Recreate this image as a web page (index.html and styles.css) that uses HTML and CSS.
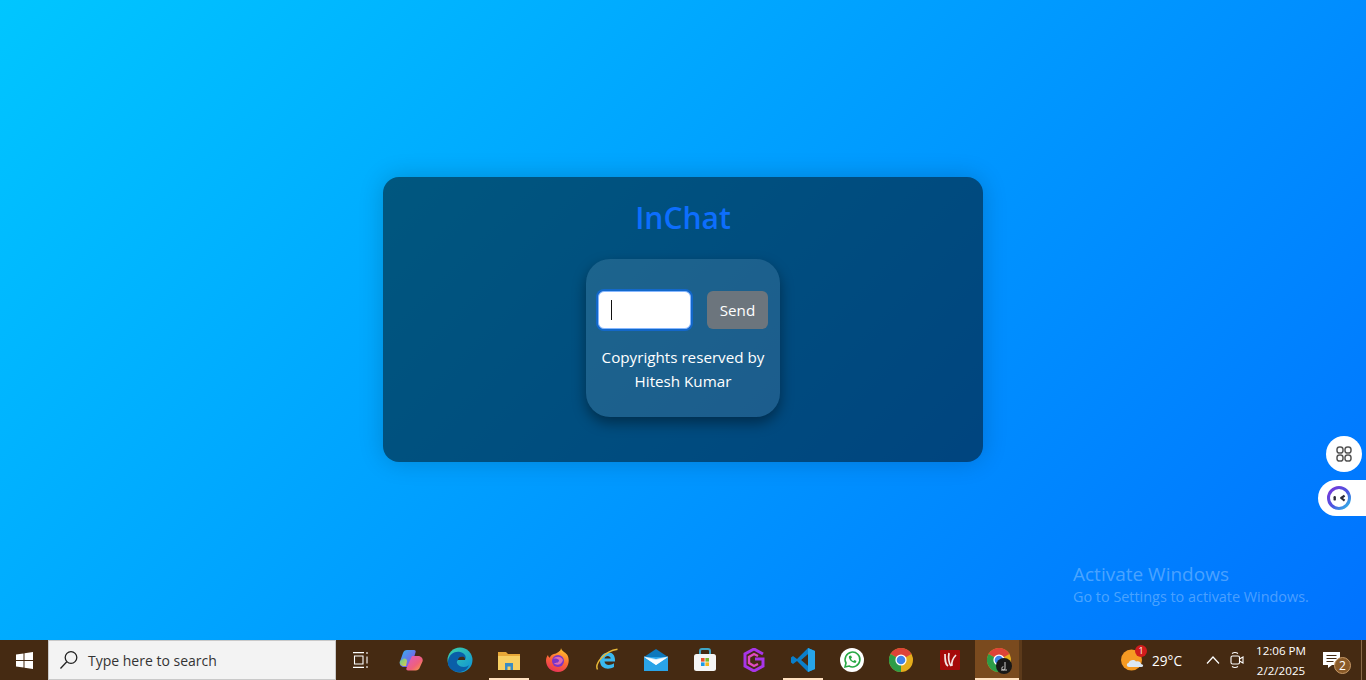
FILE: index.html
```html
<!DOCTYPE html>
<html lang="en">
<head>
<meta charset="utf-8">
<title>InChat</title>
<link rel="stylesheet" href="styles.css">
</head>
<body>
<main class="desktop">
  <section class="card">
    <h1 class="title">InChat</h1>
    <div class="panel">
      <form class="row">
        <div class="field"><span class="caret"></span></div>
        <button type="button" class="send">Send</button>
      </form>
      <p class="copy">Copyrights reserved by<br>Hitesh Kumar</p>
    </div>
  </section>
  <div class="watermark">
    <div class="wm-title">Activate Windows</div>
    <div class="wm-sub">Go to Settings to activate Windows.</div>
  </div>
  <div class="side-apps">
    <svg width="18" height="18" viewBox="0 0 18 18" fill="none" stroke="#555" stroke-width="1.5"><rect x="2" y="2" width="6" height="6" rx="2.6"/><rect x="10" y="2" width="6" height="6" rx="2.6"/><rect x="2" y="10" width="6" height="6" rx="2.6"/><rect x="10" y="10" width="6" height="6" rx="2.6"/></svg>
  </div>
  <div class="side-bot">
    <svg width="26" height="26" viewBox="0 0 26 26" fill="none">
      <defs><linearGradient id="botg" x1="0" y1="0" x2="1" y2="1"><stop offset="0" stop-color="#7a35d8"/><stop offset=".55" stop-color="#4a55e0"/><stop offset="1" stop-color="#2fc0e8"/></linearGradient></defs>
      <circle cx="13" cy="13" r="10.5" stroke="url(#botg)" stroke-width="3"/>
      <rect x="7.5" y="11" width="2.4" height="4.6" rx="1.2" fill="#2a2a3a"/>
      <path d="M18.6 10.6 15.2 13l3.4 2.6" stroke="#2a2a3a" stroke-width="2.2" stroke-linejoin="round"/>
    </svg>
  </div>
</main>
<footer class="taskbar">
  <div class="start">
    <svg width="17" height="17" viewBox="0 0 17 17" fill="#fff"><path d="M0 2.4 7.500 1.400V8H0zM8.500 1.200 17 0V8H8.500zM0 9H7.500V15.600L0 14.600zM8.500 9H17V17L8.500 15.800z"/></svg>
  </div>
  <div class="search">
    <svg width="20" height="20" viewBox="0 0 20 20" fill="none" stroke="#222" stroke-width="1.3"><circle cx="12" cy="7.5" r="5.8"/><path d="M7.8 11.8 1.5 18.5"/></svg>
    <span>Type here to search</span>
  </div>
  <div class="tray-apps">
    <div class="app task-view">
      <svg width="16" height="16" viewBox="0 0 16 16" fill="none" stroke="#fff" stroke-width="1.1"><path d="M0 .600H11M0 15.400H11M1.500 4H10V12H1.500zM14 0v2M14 4.500v7M14 14v2"/></svg>
    </div>
    <div class="app">
      <svg width="24" height="24" viewBox="0 0 24 24">
        <defs>
          <linearGradient id="cp1" x1="0" y1="0" x2="1" y2="1"><stop offset="0" stop-color="#2fb6f0"/><stop offset=".7" stop-color="#7a62e8"/><stop offset="1" stop-color="#b050d8"/></linearGradient>
          <linearGradient id="cp2" x1="0" y1="0" x2="1" y2="1"><stop offset="0" stop-color="#d85ac8"/><stop offset=".6" stop-color="#f0607a"/><stop offset="1" stop-color="#f8a83a"/></linearGradient>
          <linearGradient id="cp3" x1="0" y1="0" x2="1" y2="1"><stop offset="0" stop-color="#58c8a0"/><stop offset="1" stop-color="#e8d040"/></linearGradient>
        </defs>
        <path d="M8 2h7c1.500 0 2 1 1.500 2.500L12 19H5C2 19 0 16.500 1 13.500L4 5c.7-2 2-3 4-3z" fill="url(#cp1)"/>
        <path d="M4 11c2-1 4 0 4 2l-1 5H5c-3 0-5-2.500-4-5z" fill="url(#cp3)"/>
        <path d="M13 8h6c3 0 5.500 2.500 4.500 5.500L21 19c-.7 2-2 3.500-4.500 3.500H9c-1.500 0-2-1-1.500-2.500z" fill="url(#cp2)"/>
      </svg>
    </div>
    <div class="app">
      <svg width="26" height="26" viewBox="0 0 26 26">
        <defs><linearGradient id="edg" x1="0" y1="0" x2="1" y2="1"><stop offset="0" stop-color="#3fd3a8"/><stop offset="1" stop-color="#0c8fd8"/></linearGradient></defs>
        <circle cx="13" cy="13" r="12.5" fill="url(#edg)"/>
        <path d="M1 14C2 7 8 4 13 5c5 1 7 5 5 8h-7c-3 2 0 7 6 7 2 0 4-1 5-2-2 5-6 7-10 7C5 25 0 20 1 14z" fill="#0a5ea8"/>
        <path d="M11 13c0-3 3-4 6-3 1 1 1 2 1 3z" fill="#452a12"/>
      </svg>
    </div>
    <div class="app on">
      <svg width="22" height="20" viewBox="0 0 22 20">
        <path d="M0 2h8l2 2h12v4H0z" fill="#e8a838"/><path d="M0 6h22v14H0z" fill="#f8cf62"/><path d="M7 13h8v7h-2.500v-3.500h-3V20H7z" fill="#3a8cc4"/>
      </svg>
    </div>
    <div class="app">
      <svg width="24" height="24" viewBox="0 0 24 24">
        <defs><linearGradient id="ffx" x1=".7" y1="0" x2=".3" y2="1"><stop offset="0" stop-color="#ffc62c"/><stop offset=".5" stop-color="#ff6a33"/><stop offset="1" stop-color="#e8305a"/></linearGradient></defs>
        <path d="M15 0c.5 3 4 4 6 6.500 4 6 1 17.500-9 17.500C5 24 0 19 0 12.500 0 10 1 8 2 7c.3 1.500.8 2.200 1.800 2.700C4.500 7 7 6 10 5.500 12 4 15 3 15 0z" fill="url(#ffx)"/>
        <circle cx="12" cy="13" r="6" fill="#7a35c8"/><path d="M7 11c3-3 8-3 10 1-1 5-7 6-9 3 2 0 5 0 5-3-1-1-4-2-6-1z" fill="#e06ab0"/>
      </svg>
    </div>
    <div class="app">
      <svg width="24" height="24" viewBox="0 0 24 24" fill="none">
        <path d="M5 13c0-5.500 4-8.500 8.500-8.500S20 8 20 12v1.500H9.500c.3 4 5.500 4.500 9.500 1.800v3.700c-6 3.500-14 1.500-14-6zM9.500 10.500H15.800C15.500 7 10 7 9.500 10.500z" fill="#3ab8ee" fill-rule="evenodd"/>
        <path d="M2.500 21.500C-.5 16 9 3 22.500 1.200" stroke="#e8b838" stroke-width="1.500"/>
      </svg>
    </div>
    <div class="app">
      <svg width="24" height="22" viewBox="0 0 24 22">
        <path d="M0 8 12 0l12 8v1H0z" fill="#0e78bc"/><path d="M0 8h24v14H0z" fill="#2aa4e8"/><path d="M0 8 12 16 24 8l0-.500L12 10 0 7.500z" fill="#cfe9fa"/><path d="M1 8.500 12 11l11-2.500L12 16z" fill="#fff"/>
      </svg>
    </div>
    <div class="app">
      <svg width="24" height="24" viewBox="0 0 24 24" fill="none">
        <path d="M7 7V3c0-1 1-2 2-2h6c1 0 2 1 2 2v4" stroke="#3fa6c8" stroke-width="2"/>
        <rect x="1" y="6" width="22" height="17" rx="2.500" fill="#f5f5f5"/>
        <rect x="8" y="10" width="3.600" height="3.600" fill="#e8502a"/><rect x="12.400" y="10" width="3.600" height="3.600" fill="#7ab92c"/><rect x="8" y="14.400" width="3.600" height="3.600" fill="#1b9be8"/><rect x="12.400" y="14.400" width="3.600" height="3.600" fill="#f5b71d"/>
      </svg>
    </div>
    <div class="app">
      <svg width="22" height="24" viewBox="0 0 22 24" fill="none">
        <path d="M20 6 11 1 2 6v12l9 5 9-5v-7h-8" stroke="#a835e8" stroke-width="3"/>
        <path d="M15 8l-4-2-5 3v6l5 3 4-2" stroke="#e04ac0" stroke-width="2.400"/>
      </svg>
    </div>
    <div class="app on">
      <svg width="24" height="24" viewBox="0 0 24 24">
        <path d="M17 0 24 3v18l-7 3L6 13l-4 3-2-1.500V9.500L2 8l4 3z" fill="#0a7fcb"/>
        <path d="M17 0 24 3v18l-7 3zM17 6l-7 6 7 6z" fill="#27a5ea"/>
        <path d="M17 6l-7 6 7 6z" fill="#452a12"/>
      </svg>
    </div>
    <div class="app">
      <svg width="24" height="24" viewBox="0 0 24 24" fill="none">
        <circle cx="12" cy="12" r="12" fill="#fff"/>
        <path d="M5 19l1-4a7.400 7.400 0 1 1 3 3z" stroke="#27a844" stroke-width="1.600"/>
        <path d="M9 8c-1 3 3 7 6.500 7l1-2-2-1-1 1c-1 0-2.500-1.500-2.500-2.500l1-1-1-2z" fill="#27a844"/>
      </svg>
    </div>
    <div class="app">
      <svg width="24" height="24" viewBox="0 0 24 24"><use href="#chrome-mark"/></svg>
    </div>
    <div class="app">
      <svg width="20" height="20" viewBox="0 0 20 20" fill="none"><rect width="20" height="20" fill="#a50a0a" rx="1"/><path d="M5 4c0 6 0 10 3 12M9 3c-1 6 0 10 2 13M16 5c-2 2-5 6-4 11" stroke="#f4e6e6" stroke-width="1.700"/></svg>
    </div>
    <div class="app active">
      <svg width="24" height="24" viewBox="0 0 24 24">
        <defs>
          <g id="chrome-mark">
            <circle cx="12" cy="12" r="12" fill="#e5ad1c"/>
            <path d="M12 12 1.600 6A12 12 0 0 1 22.400 6z" fill="#dd4337"/>
            <path d="M12 12 1.600 6A12 12 0 0 0 12 24z" fill="#2d9c47"/>
            <circle cx="12" cy="12" r="5.600" fill="#fff"/>
            <circle cx="12" cy="12" r="4.300" fill="#3f83ea"/>
          </g>
        </defs>
        <use href="#chrome-mark"/>
      </svg>
      <span class="audio-badge">
        <svg width="16" height="16" viewBox="0 0 16 16"><circle cx="8" cy="8" r="8" fill="#181818"/><path d="M9 4v6M9 10a1.600 1.600 0 1 1-1.600-1.300M5 12h6" stroke="#ccc" stroke-width="1" fill="none"/></svg>
      </span>
    </div>
  </div>
  <div class="tray">
    <div class="weather">
      <span class="weather-icon">
        <svg width="24" height="24" viewBox="0 0 24 24"><circle cx="10.500" cy="12" r="10.500" fill="#f59a23"/><path d="M8 19c-2.500 0-3-3.500-.5-4C8.500 12 13 11 15 13.500c2.500-1 5 .5 5 2.500 2.500 0 3 3 .5 3z" fill="#dbe8f5"/></svg>
        <span class="weather-badge">1</span>
      </span>
      <span class="temp">29°C</span>
    </div>
    <svg class="chevron" width="14" height="8" viewBox="0 0 14 8" fill="none" stroke="#fff" stroke-width="1.200"><path d="M1 7.500 7 1l6 6.500"/></svg>
    <svg class="meet" width="14" height="18" viewBox="0 0 14 18" fill="none" stroke="#fff" stroke-width="1.100"><rect x="1" y="5" width="8.500" height="8" rx="1.500"/><path d="M9.500 8 13 6v6l-3.500-2M2 2.500Q5 .5 8 2.500M2 15.500Q5 17.500 8 15.500"/></svg>
    <div class="clock"><span>12:06 PM</span><span>2/2/2025</span></div>
    <div class="notify">
      <svg width="20" height="18" viewBox="0 0 20 18"><path d="M0 1h17v13h-8l-4 3v-3H0z" fill="#fff"/><path d="M3.500 4.500h10M3.500 7.500h10M3.500 10.500h7" stroke="#452a12"/></svg>
      <span class="notify-badge">2</span>
    </div>
    <div class="show-desktop"></div>
  </div>
</footer>
</body>
</html>
```
FILE: styles.css
```css
* { box-sizing: border-box; }
html, body { height: 100%; margin: 0; overflow: hidden; }
body {
  display: flex;
  flex-direction: column;
  font-family: "Open Sans", "Noto Sans", sans-serif;
  background: #0072ff;
}
.desktop {
  position: relative;
  flex: 1;
  display: flex;
  align-items: center;
  justify-content: center;
  background: linear-gradient(135deg, #00c6ff, #0072ff);
}
.card {
  width: 600px;
  height: 285px;
  margin-bottom: 1px;
  border-radius: 16px;
  background: rgba(0, 0, 0, 0.5);
  box-shadow: 0 0 24px rgba(0, 0, 0, 0.18);
  display: flex;
  flex-direction: column;
  align-items: center;
  padding-top: 20px;
}
.title {
  margin: 0 0 20px;
  height: 42px;
  line-height: 42px;
  font-size: 30px;
  font-weight: 600;
  color: #0d6efd;
}
.panel {
  width: 194px;
  height: 158px;
  border-radius: 24px;
  background: rgba(255, 255, 255, 0.11);
  box-shadow: 0 6px 14px rgba(0, 0, 0, 0.4);
  padding: 32px 12px 0;
}
.row {
  display: flex;
  justify-content: space-between;
  margin: 0;
}
.field {
  width: 93px;
  height: 38px;
  background: #fff;
  border: 1px solid #86b7fe;
  border-radius: 6px;
  box-shadow: 0 0 0 2px rgba(13, 110, 253, 0.55);
  display: flex;
  align-items: center;
  padding-left: 12px;
}
.caret { width: 1px; height: 20px; background: #111; }
.send {
  width: 61px;
  height: 38px;
  border: 0;
  border-radius: 6px;
  padding: 0;
  background: #6c757d;
  color: #fff;
  font: 15.2px "Open Sans", sans-serif;
}
.copy {
  margin: 16px -6px 0;
  text-align: center;
  color: #fff;
  font-size: 15.2px;
  line-height: 24px;
  white-space: nowrap;
}
.watermark {
  position: absolute;
  left: 1073px;
  top: 562px;
  color: rgba(255, 255, 255, 0.3);
}
.wm-title { font-size: 19px; line-height: 25px; }
.wm-sub { font-size: 14.4px; line-height: 20px; }
.side-apps {
  position: absolute;
  left: 1326px;
  top: 436px;
  width: 36px;
  height: 36px;
  border-radius: 50%;
  background: #fff;
  display: flex;
  align-items: center;
  justify-content: center;
}
.side-bot {
  position: absolute;
  left: 1318px;
  top: 480px;
  width: 48px;
  height: 36px;
  border-radius: 18px 0 0 18px;
  background: #fff;
  display: flex;
  align-items: center;
  padding-left: 8px;
}
.taskbar {
  height: 40px;
  flex: none;
  display: flex;
  align-items: stretch;
  background: #452a12;
  color: #fff;
}
.start {
  width: 48px;
  display: flex;
  align-items: center;
  justify-content: center;
}
.search {
  width: 288px;
  background: #f3f3f3;
  border: 1px solid #c9c9c9;
  display: flex;
  align-items: center;
  gap: 9px;
  padding-left: 10px;
  color: #333;
  font-size: 14px;
}
.tray-apps { display: flex; padding-left: 1px; }
.app {
  width: 49px;
  display: flex;
  align-items: center;
  justify-content: center;
  position: relative;
}
.task-view { padding-right: 2px; }
.app.on::after, .app.active::after {
  content: "";
  position: absolute;
  left: 5px;
  right: 4px;
  bottom: 0;
  height: 2px;
  background: #ffe0c0;
}
.app.active::after { left: 1px; }
.app.active {
  background: linear-gradient(90deg, transparent 1px, #7a4a1e 1px, #7a4a1e 45px, #5c3a1a 45px, #5c3a1a 48px, transparent 48px);
}
.audio-badge {
  position: absolute;
  left: 22px;
  top: 18px;
  display: flex;
}
.tray {
  flex: 1;
  display: flex;
  align-items: center;
  justify-content: flex-end;
  font-size: 11.6px;
}
.weather { display: flex; align-items: center; gap: 7px; margin-right: 24px; }
.weather-icon { position: relative; display: flex; }
.weather-badge {
  position: absolute;
  right: -2px;
  top: -3px;
  width: 12px;
  height: 12px;
  border-radius: 50%;
  background: #d01c1c;
  font-size: 9px;
  line-height: 12px;
  text-align: center;
}
.temp { font-size: 13.6px; }
.chevron { margin-right: 10px; }
.meet { margin-right: 12px; }
.clock {
  width: 50px;
  display: flex;
  flex-direction: column;
  align-items: center;
  line-height: 20px;
  white-space: nowrap;
  padding-top: 2px;
  margin-right: 17px;
}
.notify { position: relative; display: flex; margin-right: 18px; }
.notify-badge {
  position: absolute;
  left: 11px;
  top: 6px;
  width: 17px;
  height: 17px;
  border-radius: 50%;
  background: #8a5a28;
  border: 1px solid #c89a68;
  font-size: 12px;
  line-height: 15px;
  text-align: center;
}
.show-desktop {
  width: 5px;
  height: 40px;
  border-left: 1px solid #8a6a4a;
}
```
